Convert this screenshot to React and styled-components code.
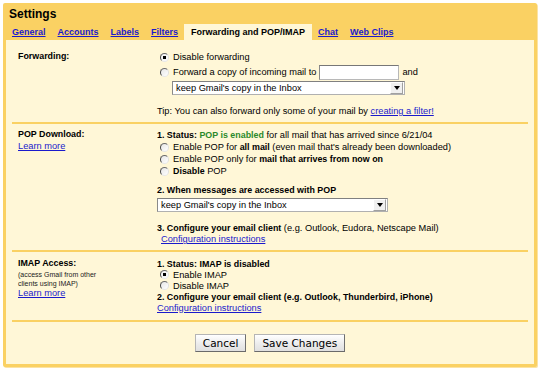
import React from 'react';
import styled, { createGlobalStyle } from 'styled-components';

const GlobalStyle = createGlobalStyle`
    body {
        margin: 0;
        background-color: #ffffff;
        font-family: "Liberation Sans", Arial, sans-serif;
        color: #000000;
    }
`;

const Frame = styled.div`
    margin: 3px;
    width: 528px;
    padding: 4px 3px 3px 3px;
    background-color: #fad163;
    border-radius: 2px;
    box-shadow: 1px 1px 0 #fbe3a4;
`;

const Title = styled.div`
    padding-left: 3px;
    font-size: 12px;
    line-height: 14px;
    font-weight: bold;
`;

const Tabs = styled.div`
    margin-top: 3px;
    display: flex;
    flex-direction: row;
`;

const Tab = styled.a`
    padding: 0 6px;
    height: 16px;
    line-height: 16px;
    font-size: 9px;
    font-weight: bold;
    color: #1a1acc;
    text-decoration: underline;
    ${props => props.active && `
        color: #000000;
        text-decoration: none;
        background-color: #fff7d7;
        padding: 0 7px;
    `}
`;

const Panel = styled.div`
    background-color: #fff7d7;
    padding: 0 6px;
`;

const Section = styled.div`
    display: grid;
    grid-template-columns: 139px 1fr;
    padding: ${props => props.pad || '5px 0 6px 6px'};
    border-bottom: 2px solid #fad163;
`;

const Label = styled.div`
    display: flex;
    flex-direction: column;
    font-size: 9.25px;
    line-height: 11.5px;
    b {
        font-size: 8.9px;
    }
`;

const Small = styled.div`
    font-size: 7px;
    line-height: 9px;
    color: #222222;
`;

const Options = styled.div`
    display: flex;
    flex-direction: column;
    font-size: 9.25px;
`;

const Line = styled.div`
    display: flex;
    flex-direction: row;
    align-items: center;
    height: ${props => props.h || 12}px;
    margin-top: ${props => props.mt || 0}px;
    padding-left: ${props => props.indent || 0}px;
    white-space: nowrap;
    b {
        font-size: 8.9px;
    }
`;

const Link = styled.a`
    color: #1a1acc;
    text-decoration: underline;
`;

const Green = styled.b`
    color: #2b8a2b;
`;

const Radio = styled.span`
    display: inline-block;
    box-sizing: border-box;
    width: 9px;
    height: 9px;
    margin: 0 4px 0 3px;
    border-radius: 50%;
    border: 1px solid #9a9a9a;
    border-left-color: #4a4a4a;
    border-top-color: #6a6a6a;
    border-right-color: #e0e0e0;
    border-bottom-color: #e8e8e8;
    background: ${props => props.checked
        ? 'radial-gradient(circle, #000000 0, #000000 1.6px, #f4f4f4 2px, #ffffff 100%)'
        : 'linear-gradient(135deg, #e6e6e6, #ffffff)'};
`;

const TextInput = styled.span`
    display: inline-block;
    box-sizing: border-box;
    width: 80px;
    height: 15px;
    margin: 0 3px 0 3px;
    background-color: #ffffff;
    border: 1px solid #b8b8b8;
    border-top-color: #777777;
    border-left-color: #8a8a8a;
`;

const Select = styled.div`
    display: flex;
    flex-direction: row;
    align-items: center;
    box-sizing: border-box;
    width: ${props => props.w}px;
    height: 14px;
    margin-left: ${props => props.indent || 0}px;
    margin-top: ${props => props.mt || 0}px;
    background-color: #ffffff;
    border: 1px solid #b0b0b0;
    border-top-color: #808080;
    border-left-color: #8a8a8a;
    font-size: 9.25px;
    white-space: nowrap;
`;

const SelectText = styled.span`
    flex: 1;
    padding-left: 3px;
`;

const Arrow = styled.span`
    display: flex;
    align-items: center;
    justify-content: center;
    width: 11px;
    height: 10px;
    margin-right: 1px;
    border: 1px solid #a0a0a0;
    border-top-color: #ffffff;
    border-left-color: #ffffff;
    background-color: #f0f0f0;
    &::after {
        content: '';
        border-left: 3px solid transparent;
        border-right: 3px solid transparent;
        border-top: 4px solid #000000;
    }
`;

const Footer = styled.div`
    display: flex;
    flex-direction: row;
    justify-content: center;
    gap: 8px;
    padding: 12px 0 12px 0;
`;

const Button = styled.button`
    height: 18px;
    padding: 0 7px;
    font-family: "DejaVu Sans", "Liberation Sans", sans-serif;
    font-size: 10.5px;
    color: #000000;
    background: linear-gradient(#ffffff, #ececec 55%, #e0e0e0);
    border: 1px solid #b5b5b5;
    border-right-color: #6f6f6f;
    border-bottom-color: #6a6a6a;
    border-radius: 0;
`;

function SelectBox(props) {
    const { w, indent, mt, children } = props;
    return (
        <Select w={w} indent={indent} mt={mt}>
            <SelectText>{children}</SelectText>
            <Arrow />
        </Select>
    );
}

function App() {
    return (
        <>
            <GlobalStyle />
            <Frame>
                <Title>Settings</Title>
                <Tabs>
                    <Tab>General</Tab>
                    <Tab>Accounts</Tab>
                    <Tab>Labels</Tab>
                    <Tab>Filters</Tab>
                    <Tab active>Forwarding and POP/IMAP</Tab>
                    <Tab>Chat</Tab>
                    <Tab>Web Clips</Tab>
                </Tabs>
                <Panel>
                    <Section pad="11px 0 5px 6px">
                        <Label>
                            <b>Forwarding:</b>
                        </Label>
                        <Options>
                            <Line>
                                <Radio checked />Disable forwarding
                            </Line>
                            <Line h={18}>
                                <Radio />Forward a copy of incoming mail to
                                <TextInput />and
                            </Line>
                            <SelectBox w={233} indent={15}>
                                keep Gmail's copy in the Inbox
                            </SelectBox>
                            <Line mt={10}>
                                Tip: You can also forward only some of your mail by&nbsp;
                                <Link>creating a filter!</Link>
                            </Line>
                        </Options>
                    </Section>

                    <Section pad="5px 0 6px 6px">
                        <Label>
                            <b>POP Download:</b>
                            <Link>Learn more</Link>
                        </Label>
                        <Options>
                            <Line>
                                <b>1. Status:&nbsp;</b>
                                <Green>POP is enabled</Green>&nbsp;for all mail that has arrived since 6/21/04
                            </Line>
                            <Line>
                                <Radio />Enable POP for&nbsp;<b>all mail</b>&nbsp;(even mail that's already been downloaded)
                            </Line>
                            <Line>
                                <Radio />Enable POP only for&nbsp;<b>mail that arrives from now on</b>
                            </Line>
                            <Line>
                                <Radio /><b>Disable</b>&nbsp;POP
                            </Line>
                            <Line mt={7}>
                                <b>2. When messages are accessed with POP</b>
                            </Line>
                            <SelectBox w={231} mt={2}>
                                keep Gmail's copy in the Inbox
                            </SelectBox>
                            <Line mt={10}>
                                <b>3. Configure your email client</b>&nbsp;(e.g. Outlook, Eudora, Netscape Mail)
                            </Line>
                            <Line h={10} indent={4}>
                                <Link>Configuration instructions</Link>
                            </Line>
                        </Options>
                    </Section>

                    <Section pad="6px 0 7px 6px">
                        <Label>
                            <b>IMAP Access:</b>
                            <Small>(access Gmail from other<br />clients using IMAP)</Small>
                            <Link>Learn more</Link>
                        </Label>
                        <Options>
                            <Line h={11}>
                                <b>1. Status: IMAP is disabled</b>
                            </Line>
                            <Line h={11}>
                                <Radio checked />Enable IMAP
                            </Line>
                            <Line h={11}>
                                <Radio />Disable IMAP
                            </Line>
                            <Line h={11}>
                                <b>2. Configure your email client (e.g. Outlook, Thunderbird, iPhone)</b>
                            </Line>
                            <Line h={11}>
                                <Link>Configuration instructions</Link>
                            </Line>
                        </Options>
                    </Section>

                    <Footer>
                        <Button>Cancel</Button>
                        <Button>Save Changes</Button>
                    </Footer>
                </Panel>
            </Frame>
        </>
    );
}

export default App;
